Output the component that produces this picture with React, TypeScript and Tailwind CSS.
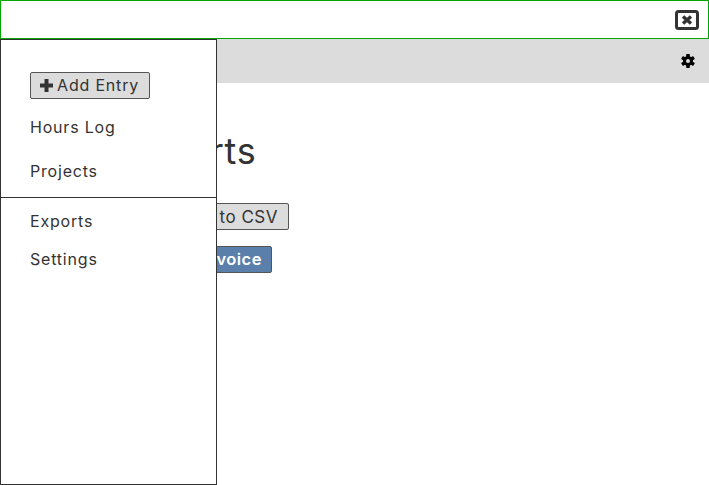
import React from "react";

function Close() {
  return (
    <svg width="24" height="20" viewBox="0 0 24 20">
      <rect x="1.5" y="1.5" width="21" height="17" rx="2" fill="#fff" stroke="#333" strokeWidth="3" />
      <path d="M8 6.500 L16 13.500 M16 6.500 L8 13.500" stroke="#333" strokeWidth="3.400" />
    </svg>
  );
}

function Gear() {
  return (
    <svg width="14" height="14" viewBox="0 0 14 14">
      <g fill="#000">
        <circle cx="7" cy="7" r="5" />
        <rect x="5.200" y="0" width="3.600" height="14" rx="0.600" />
        <rect x="5.200" y="0" width="3.600" height="14" rx="0.600" transform="rotate(60 7 7)" />
        <rect x="5.200" y="0" width="3.600" height="14" rx="0.600" transform="rotate(120 7 7)" />
      </g>
      <circle cx="7" cy="7" r="2" fill="#dcdcdc" />
    </svg>
  );
}

export default function App() {
  return (
    <div className="relative h-[485px] w-[709px] overflow-hidden bg-white font-['Inter',sans-serif] text-[#333]">
      <div className="flex h-[39px] items-center justify-end border border-[#00a800] bg-white pr-[9px]">
        <Close />
      </div>
      <div className="flex h-[44px] items-center justify-end bg-[#dcdcdc] pr-[14px]">
        <Gear />
      </div>
      <div className="pl-[118px] pt-[46px]">
        <h1 className="pl-[4px] text-[36px] leading-[44px] tracking-[0.7px]">Exports</h1>
        <div className="mt-[30px] flex flex-col items-start gap-[16px] text-[17px] leading-[18px] tracking-[0.5px]">
          <button className="h-[27px] w-[171px] rounded-[2px] border border-[#555] bg-[#dcdcdc] pr-[10px] text-right">Export to CSV</button>
          <button className="h-[27px] w-[154px] rounded-[2px] border border-[#555] bg-[#5b7fab] pb-[2px] pr-[9px] text-right text-[16.500px] font-semibold text-white">Create Invoice</button>
        </div>
      </div>
      <nav className="absolute bottom-0 left-0 top-[39px] w-[217px] border border-[#333] bg-white text-[16px] tracking-[0.8px]">
        <div className="px-[29px] pt-[32px]">
          <button className="flex h-[27px] w-[120px] items-center justify-end gap-[4px] rounded-[2px] border border-[#555] bg-[#dcdcdc] pr-[10px] leading-[22px]">
            <svg width="13" height="13" viewBox="0 0 13 13"><path d="M4.500 0h4v4.500H13v4H8.500V13h-4V8.500H0v-4h4.500z" fill="#333" /></svg>
            <span className="pb-[1px]">Add Entry</span>
          </button>
          <div className="mt-[16px] leading-[24px]">Hours Log</div>
          <div className="mt-[20px] leading-[24px]">Projects</div>
        </div>
        <div className="mt-[14px] border-t border-[#333] px-[29px] pt-[11px]">
          <div className="leading-[24px]">Exports</div>
          <div className="mt-[14px] leading-[24px]">Settings</div>
        </div>
      </nav>
    </div>
  );
}
